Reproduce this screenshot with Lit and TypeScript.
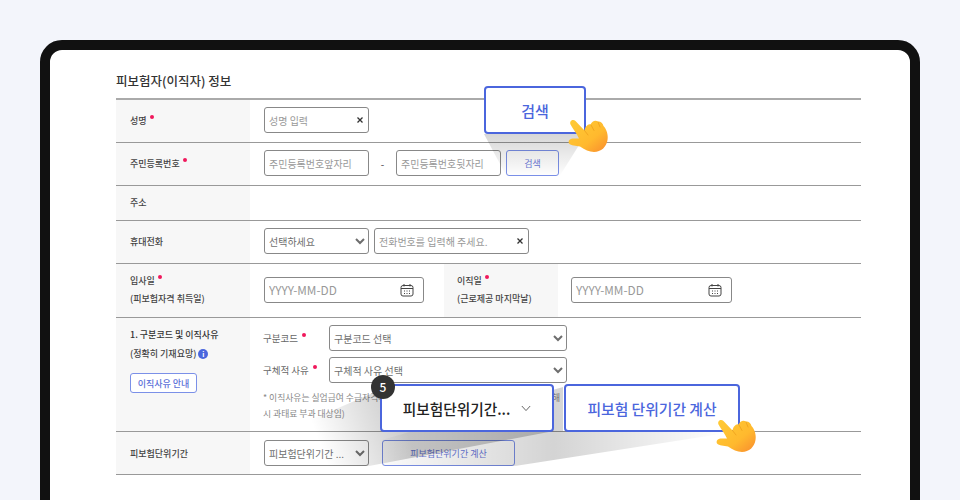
import { LitElement, html, css, svg } from "lit";
import { customElement } from "lit/decorators.js";

const hand = (x: number, y: number) => svg`
  <g transform="translate(${x} ${y})">
    <path fill="url(#handB)" d="M2.500 6.500C1 3 5 0.500 7.500 3L16.500 12.500C17 9 20 5.500 22.500 6.500C24 3.500 27 1.500 30 3.500C32 3 35 5 35.500 8C38.500 11 40.500 17 39.500 22C38.500 29 33 34 26 34C21 34 17 31.500 12 28.500C8 28 3 27.500 1 25.500C-0.500 22 3 20 7 20.500L11 20.500C9 16 5 11 2.500 6.500Z"/>
    <path fill="none" stroke="#e59414" stroke-width=".8" stroke-linecap="round" opacity=".7" d="M16.500 12.500L20 17M23 7L26 12.500M30 4L32 9"/>
  </g>`;

@customElement("app-root")
export class AppRoot extends LitElement {
  static styles = css`
    :host { display: block; width: 960px; height: 500px; overflow: hidden; position: relative;
      background: #f3f5fb; font-family: "Noto Sans CJK KR", "Noto Sans", sans-serif; color: #444; }
    .frame { box-sizing: border-box; width: 880px; height: 520px; margin: 40px 0 0 40px; border: 10px solid #111;
      border-radius: 22px; background: #fff; padding: 21px 49px 0 66px; }
    h2 { margin: 0 0 7px; font-size: 12.500px; line-height: 20px; font-weight: 500; color: #333; }
    .table { border-top: 2px solid #aaa; }
    .row { display: flex; border-bottom: 1px solid #999; box-sizing: border-box; }
    .r1, .r2, .r4, .r7 { height: 43px; }
    .r3 { height: 35px; }
    .r5 { height: 54px; }
    .r6 { height: 114px; }
    .th { box-sizing: border-box; width: 134px; flex: none; background: #f7f7f7; padding: 0 0 2px 14px; display: flex;
      flex-direction: column; justify-content: center; font-size: 9px; font-weight: 500; color: #444; line-height: 19px; white-space: nowrap; }
    .r5 .th { line-height: 18.500px; padding-bottom: 1px; }
    .r7 .th { padding-bottom: 0; }
    .th2 { width: 114px; margin-left: 20px; padding-left: 13px; }
    .td { display: flex; align-items: center; padding-left: 14px; flex: none; box-sizing: border-box; }
    .r1 .td, .r2 .td, .r4 .td { padding-bottom: 2px; }
    .r5 .td { padding-bottom: 1px; }
    .td2 { padding-left: 13px; }
    .req { display: inline-block; width: 4px; height: 4px; border-radius: 50%; background: #f0185c; vertical-align: 5px; margin-left: 1px; }
    .field { position: relative; display: block; flex: none; height: 26px; }
    input, select { box-sizing: border-box; height: 100%; width: 100%; border: 1px solid #888; border-radius: 3px; background-color: #fff;
      font-family: inherit; font-size: 10px; color: #6e6e6e; margin: 0; outline: none; display: block; }
    input { padding: 0 4px; }
    select { padding: 0; }
    input::placeholder { color: #999; }
    .date input::placeholder { font-size: 11.800px; }
    .w105 { width: 105px; }
    .w155 { width: 155px; margin-left: 5px; }
    .w160 { width: 160px; }
    .w161 { width: 161px; }
    .w238 { width: 238px; }
    .x { position: absolute; right: 4px; top: 8px; width: 10px; height: 10px; }
    .cal { position: absolute; right: 10px; top: 6px; width: 14px; height: 14px; }
    .dash { width: 27px; text-align: center; font-size: 10px; flex: none; }
    .btn { box-sizing: border-box; border: 1px solid #7b90e8; border-radius: 3px; background: #fff; color: #6a78d8; font-family: inherit;
      font-size: 9px; font-weight: 400; height: 26px; padding: 0; display: block; flex: none; }
    .b52 { width: 53px; margin-left: 5px; }
    .b133 { width: 133px; margin-left: 13px; }
    .b67 { width: 67px; height: 20px; margin-top: 10px; font-weight: 500; color: #5a6fd8; }
    .th6 { justify-content: flex-start; padding-top: 7px; }
    .strong { color: #333; }
    .info { display: inline-block; width: 10px; height: 10px; border-radius: 50%; background: #4a66dd; color: #fff; font-size: 7px; line-height: 10px;
      text-align: center; margin-left: 2px; font-weight: 700; vertical-align: 0.5px; }
    .stack { display: flex; flex-direction: column; align-items: flex-start; padding: 7px 0 0 13px; }
    .pair { display: flex; align-items: center; height: 26px; margin-bottom: 6px; font-size: 9.500px; color: #666; }
    .pair label { width: 66px; flex: none; padding-bottom: 1px; }
    .pair .req { margin-left: 2px; }
    .note { font-size: 8.800px; line-height: 16px; color: #888; margin-top: 1px; width: 330px; white-space: nowrap; }
    .beams { position: absolute; left: 0; top: 0; width: 960px; height: 500px; pointer-events: none; }
    .call { position: absolute; box-sizing: border-box; background: #fff; border: 2px solid #4b66dd; border-radius: 4px; display: flex;
      align-items: center; justify-content: center; color: #4b66dd; font-weight: 500; }
    .c1 { left: 484px; top: 86px; width: 102px; height: 48px; font-size: 15px; }
    .c2 { left: 380px; top: 384px; width: 174px; height: 48px; font-size: 14.700px; color: #222; gap: 11px; }
    .c2 svg { width: 10px; height: 7px; }
    .c3 { left: 564px; top: 384px; width: 176px; height: 48px; font-size: 14.800px; }
    .badge { position: absolute; left: 371px; top: 375px; width: 24px; height: 24px; border-radius: 50%; background: #333; color: #fff;
      font-size: 12px; font-weight: 500; line-height: 24px; text-align: center; }
  `;

  private xIcon() {
    return html`<svg class="x" viewBox="0 0 10 10"><path d="M2.500 2.500L7.500 7.500M7.500 2.500L2.500 7.500" stroke="#333" stroke-width="1.300" fill="none"/></svg>`;
  }
  private calIcon() {
    return html`<svg class="cal" viewBox="0 0 14 14" fill="none" stroke="#444" stroke-width="1"><rect x="1" y="2.500" width="12" height="10.500" rx="2"/><path d="M1 5.500H13M4 1V3.500M10 1V3.500"/><path d="M4 8H5M6.500 8H7.500M9 8H10M4 10.500H5M6.500 10.500H7.500M9 10.500H10" stroke-width="1"/></svg>`;
  }

  render() {
    return html`
      <div class="frame">
        <h2>피보험자(이직자) 정보</h2>
        <div class="table">
          <div class="row r1">
            <div class="th"><div>성명 <span class="req"></span></div></div>
            <div class="td"><span class="field w105"><input placeholder="성명 입력" />${this.xIcon()}</span></div>
          </div>
          <div class="row r2">
            <div class="th"><div>주민등록번호 <span class="req"></span></div></div>
            <div class="td">
              <span class="field w105"><input placeholder="주민등록번호앞자리" /></span>
              <span class="dash">-</span>
              <span class="field w105"><input placeholder="주민등록번호뒷자리" /></span>
              <button class="btn b52">검색</button>
            </div>
          </div>
          <div class="row r3"><div class="th">주소</div><div class="td"></div></div>
          <div class="row r4">
            <div class="th">휴대전화</div>
            <div class="td">
              <span class="field w105"><select><option>선택하세요</option></select></span>
              <span class="field w155"><input placeholder="전화번호를 입력해 주세요." />${this.xIcon()}</span>
            </div>
          </div>
          <div class="row r5">
            <div class="th"><div>입사일 <span class="req"></span></div><div>(피보험자격 취득일)</div></div>
            <div class="td"><span class="field w160 date"><input placeholder="YYYY-MM-DD" />${this.calIcon()}</span></div>
            <div class="th th2"><div>이직일 <span class="req"></span></div><div>(근로제공 마지막날)</div></div>
            <div class="td td2"><span class="field w161 date"><input placeholder="YYYY-MM-DD" />${this.calIcon()}</span></div>
          </div>
          <div class="row r6">
            <div class="th th6">
              <div class="strong">1. 구분코드 및 이직사유</div>
              <div>(정확히 기재요망)<span class="info">i</span></div>
              <button class="btn b67">이직사유 안내</button>
            </div>
            <div class="td stack">
              <div class="pair"><label>구분코드 <span class="req"></span></label><span class="field w238"><select><option>구분코드 선택</option></select></span></div>
              <div class="pair"><label>구체적 사유 <span class="req"></span></label><span class="field w238"><select><option>구체적 사유 선택</option></select></span></div>
              <div class="note">* 이직사유는 실업급여 수급자격과 직결되는 중요한 사항이므로 정확하게 꼭 기재해<br />시 과태료 부과 대상임)</div>
            </div>
          </div>
          <div class="row r7">
            <div class="th">피보험단위기간</div>
            <div class="td">
              <span class="field w105"><select><option>피보험단위기간 ...</option></select></span>
              <button class="btn b133">피보험단위기간 계산</button>
            </div>
          </div>
        </div>
      </div>

      <svg class="beams" viewBox="0 0 960 500">
        <defs>
          <linearGradient id="g1" x1="0" y1="0" x2="0" y2="1"><stop offset="0" stop-color="#000" stop-opacity=".16"/><stop offset="1" stop-color="#000" stop-opacity="0"/></linearGradient>
          <linearGradient id="g2" gradientUnits="userSpaceOnUse" x1="400" y1="415" x2="320" y2="445"><stop offset="0" stop-color="#000" stop-opacity=".2"/><stop offset="1" stop-color="#000" stop-opacity="0"/></linearGradient>
          <linearGradient id="g3" gradientUnits="userSpaceOnUse" x1="382" y1="0" x2="725" y2="0"><stop offset="0" stop-color="#000" stop-opacity=".02"/><stop offset=".5" stop-color="#000" stop-opacity=".17"/><stop offset="1" stop-color="#000" stop-opacity="0"/></linearGradient>
          <linearGradient id="handB" x1="0" y1="0" x2="1" y2="1"><stop offset="0" stop-color="#ffcb35"/><stop offset=".6" stop-color="#ffb92e"/><stop offset="1" stop-color="#f98b2e"/></linearGradient>
        </defs>
        <path fill="url(#g1)" d="M484 134H586L559 177H507Z"/>
        <path fill="url(#g2)" d="M380 390L264 440V466H369L554 431Z"/>
        <path fill="url(#g3)" d="M563 387L382 440V466H515L740 431H563Z"/>
      </svg>
      <div class="call c1">검색</div>
      <div class="call c2"><span>피보험단위기간...</span><svg viewBox="0 0 12 8" fill="none" stroke="#666" stroke-width="1.200"><path d="M1 1L6 6.500L11 1"/></svg></div>
      <div class="call c3">피보험 단위기간 계산</div>
      <div class="badge">5</div>
      <svg class="beams" viewBox="0 0 960 500">
        ${hand(568, 118)}
        ${hand(716, 418)}
      </svg>
    `;
  }
}
